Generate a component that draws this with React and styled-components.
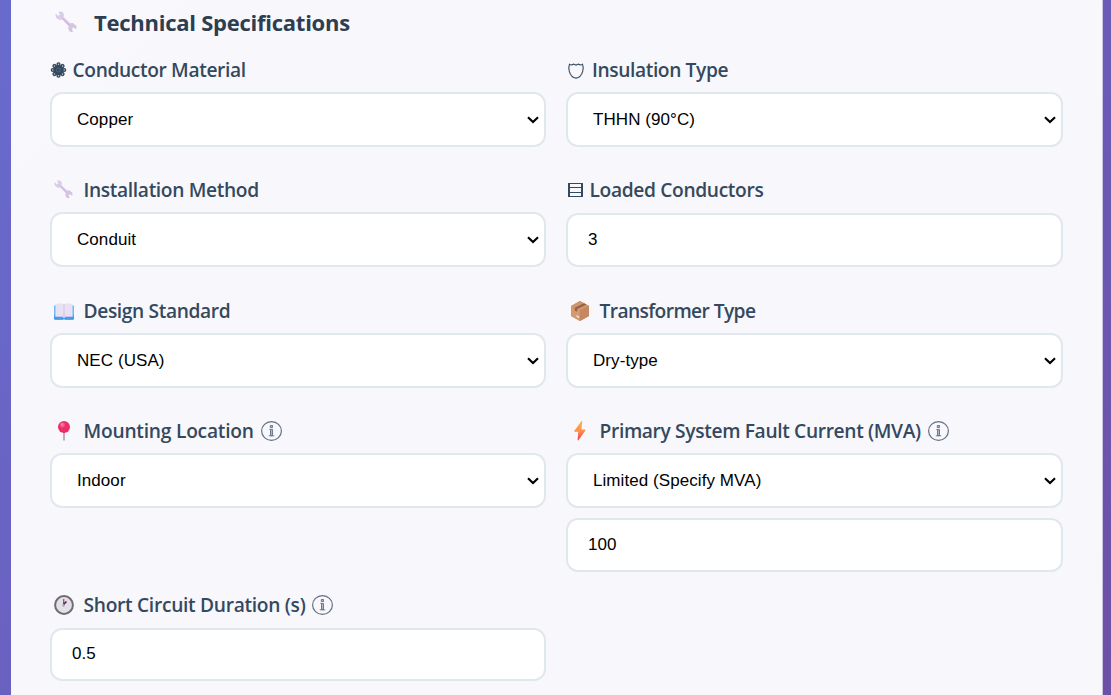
import React from "react";
import styled, { createGlobalStyle } from "styled-components";

const GlobalStyle = createGlobalStyle`
  * { box-sizing: border-box; }
  html, body, #root { height: 100%; }
  body { margin: 0; overflow: hidden; }
`;

const Page = styled.div`
  height: 695px;
  padding: 0 8px 0 11px;
  background: linear-gradient(135deg, #686bcd 0%, #6a5dbb 55%, #6d4fa5 100%);
  font-family: "Open Sans", "Noto Sans", sans-serif;
`;

const Card = styled.main`
  height: 100%;
  padding: 0 39px;
  border-right: 1px solid #c8c4e4;
  background: linear-gradient(135deg, #f8f9fe 0%, #f8f7fc 12%, #f8f7fc 100%);
`;

const Heading = styled.h2`
  display: flex;
  align-items: center;
  height: 62px;
  margin: 0;
  padding: 0 0 18px 1px;
  color: #2c3e50;
  font-size: 22px;
  font-weight: 700;
  letter-spacing: -0.25px;
  white-space: nowrap;
`;

const Grid = styled.div`
  display: grid;
  grid-template-columns: 496px 497px;
  grid-template-rows: 120px 121px 120px 174px 84px;
  column-gap: 20px;
`;

const Field = styled.div`
  display: flex;
  flex-direction: column;
`;

const Label = styled.label`
  display: flex;
  align-items: center;
  height: 30px;
  margin-bottom: ${(p) => p.$drop || 0}px;
  padding: 0 0 15px 1px;
  color: #34495e;
  font-size: 19.2px;
  font-weight: 600;
  line-height: 15px;
  letter-spacing: ${(p) => p.$spacing || 0}px;
  white-space: nowrap;
`;

const IconSlot = styled.span`
  display: flex;
  flex: none;
  width: ${(p) => p.$width}px;
  padding-left: ${(p) => p.$left || 0}px;
  svg { display: block; overflow: visible; }
`;

const InfoSlot = styled.span`
  display: flex;
  margin-left: 7px;
`;

const SelectWrap = styled.div`
  position: relative;
`;

const Select = styled.select`
  display: block;
  width: 100%;
  height: 55px;
  padding: 0 24px 1px 25px;
  border: 2px solid #e0e8ed;
  border-radius: 12px;
  background: #fff;
  color: #000;
  font: 17px "Liberation Sans", Arial, sans-serif;
  letter-spacing: 0.07px;
  appearance: none;
`;

const Chevron = styled.svg`
  position: absolute;
  top: 24px;
  right: 7px;
  pointer-events: none;
`;

const Input = styled.input`
  flex: none;
  width: 100%;
  height: ${(p) => p.$height || 54}px;
  margin-top: ${(p) => p.$gap || 0}px;
  padding: 0 20px 1px;
  border: 2px solid #e0e8ed;
  border-radius: 12px;
  background: #fff;
  color: #000;
  font: 17px "Liberation Sans", Arial, sans-serif;
  letter-spacing: 0.07px;
`;

const Wrench = ({ size = 22 }) => (
  <svg width={size} height={size} viewBox="0 0 22 22">
    <defs>
      <linearGradient id="wrench" x1="0" y1="0" x2="1" y2="1">
        <stop offset="0" stopColor="#d5d0dc" />
        <stop offset=".3" stopColor="#dccbea" />
        <stop offset=".65" stopColor="#d8c5e8" />
        <stop offset="1" stopColor="#cbc6ce" />
      </linearGradient>
    </defs>
    <path
      fill="url(#wrench)"
      d="M4.2.6 7.8 1 9 3.8 8.7 6l6.5 6.3 2.5-.4 3.6 2.8.1 3.1-1.1.1-1.5-1.6-2.1 1.7 1.3 2.2-.7 1-2.7-.7-1.5-2.9.5-2.6L7.2 8.6 4.5 9 1.1 6.8.3 3.4l1-.4L3 5.1l2.2-1.6L3.5 1.5Z"
    />
    <path d="m7 7 8 8" stroke="#b9a8d3" strokeWidth=".6" />
  </svg>
);

const Flower = () => (
  <svg width="16" height="16" viewBox="-7.5 -8 16 16">
    <circle r="5.3" fill="#34495e" />
    {[0, 45, 90, 135, 180, 225, 270, 315].map((a) => (
      <circle key={a} cx="5.7" r="1.4" transform={`rotate(${a})`} fill="#cbd1da" stroke="#34495e" strokeWidth="1.4" />
    ))}
    <circle r="2" fill="none" stroke="#66788b" strokeWidth=".6" />
  </svg>
);

const Shield = () => (
  <svg width="16" height="16" viewBox="0 -1 16 16" fill="none" stroke="#43566a" strokeWidth="1.2">
    <path d="M1.5 1.3c1.6.9 3 .7 4.2-.2L8 2l2.3-.9c1.2.9 2.6 1.1 4.2.2.8 2 .9 4.8.1 7.3C13.6 12.3 11.3 14.6 8 15.2 4.7 14.6 2.4 12.3 1.4 8.6.6 6.1.7 3.3 1.5 1.3Z" />
  </svg>
);

const Rows = () => (
  <svg width="15" height="14" viewBox="0 0 15 14" fill="none" stroke="#34495e">
    <path d="M1 0v14M14 0v14" strokeWidth="2" />
    <path d="M.5.5h14M1 4.5h13M1 9.5h13M.5 13.5h14" strokeWidth="1.2" />
  </svg>
);

const Book = () => (
  <svg width="20" height="17" viewBox="0 -1 20 17">
    <path d="M0 2.5h2v12h16v-12h2V16l-1 .7h-8l-1-.7-1 .7H1L0 16Z" fill="#6bbcf5" />
    <path d="M0 12.5h20V16l-1 .7h-8l-1-.7-1 .7H1L0 16Z" fill="#429eed" />
    <path d="M1.5 1.3 3 .5h5l2 1 2-1h5l1.5.8V14h-7L10 15l-1.5-1h-7Z" fill="#e9e0f3" />
    <path d="M10 1.5V15" stroke="#cfc2df" />
    <path d="M2 13.5h7M11 13.5h7" stroke="#c8c7ef" />
  </svg>
);

const Package = () => (
  <svg width="18" height="20" viewBox="0 0 18 20">
    <path d="m0 5 9-5 9 5v10l-9 5-9-5Z" fill="#c9895a" />
    <path d="m0 5 9-5 9 5-9 4.5Z" fill="#d09569" />
    <path d="m0 5 9 4.5V20l-9-5Z" fill="#d49a6e" />
    <path d="m9 9.5 9-4.5v10l-9 5Z" fill="#c48760" />
    <path d="m3.8 6.8 9.3-4.6 2.2 1.2-9.2 4.7Z" fill="#906149" />
    <path d="m3.8 6.8 2.3 1.3v2.6L3.8 9.5Z" fill="#906149" />
    <path d="m5.5 14 2.5 1.3v2L5.5 16Z" fill="#eddbd5" />
  </svg>
);

const Pin = () => (
  <svg width="12" height="20" viewBox="0 0 12 20">
    <path d="M6 11v8.5" stroke="#a799b1" strokeWidth="1.5" />
    <circle cx="6" cy="6" r="6" fill="#ee2d68" />
    <circle cx="4.5" cy="4" r="2.4" fill="#fa5c88" />
    <circle cx="4" cy="3.5" r="1" fill="#ff91a9" />
  </svg>
);

const Bolt = () => (
  <svg width="12" height="20" viewBox="0 0 12 20">
    <defs>
      <linearGradient id="bolt" x1="0" y1="0" x2="0" y2="1">
        <stop offset="0" stopColor="#ffb33c" />
        <stop offset=".5" stopColor="#ff914b" />
        <stop offset="1" stopColor="#f4365b" />
      </linearGradient>
    </defs>
    <path d="M7.5 0 .2 10l.3.8h3.8L3.6 19l.6.5L11.500 9.400l-.4-.8H7.400L8.300.5Z" fill="url(#bolt)" />
  </svg>
);

const Clock = () => (
  <svg width="20" height="20" viewBox="0 0 20 20">
    <circle cx="10" cy="10" r="8.9" fill="#e4e0e7" stroke="#6f6b72" strokeWidth="2" />
    <path d="M9.7 4v5.500" stroke="#ed285f" strokeWidth="1.3" />
    <path d="m9.5 9.5 3-3" stroke="#40315c" strokeWidth="1.7" />
    <circle cx="9.5" cy="10.5" r="1.2" fill="#aaa3b0" />
  </svg>
);

const Info = () => (
  <InfoSlot>
    <svg width="21" height="20" viewBox="0 0 21 20" fill="none" stroke="#607184">
      <ellipse cx="10.5" cy="10" rx="9.9" ry="9.3" strokeWidth="1.2" />
      <path d="M9.3 4.500h2.200v2H9.300zM8.400 8.400h3.100v6.200H9.500V8.400M7.800 14.800h5.400" strokeWidth=".9" fill="#aeb7c1" />
    </svg>
  </InfoSlot>
);

function Caption({ icon, left, slot = 32.5, text, spacing = -0.35, info, drop }) {
  return (
    <Label $spacing={spacing} $drop={drop}>
      <IconSlot $width={slot} $left={left}>{icon}</IconSlot>
      {text}
      {info && <Info />}
    </Label>
  );
}

function Choice({ value }) {
  return (
    <SelectWrap>
      <Select defaultValue={value}>
        <option>{value}</option>
      </Select>
      <Chevron width="12" height="8" viewBox="0 0 12 8" fill="none" stroke="#000" strokeWidth="2.2">
        <path d="m1 1.3 5 4.7 5-4.7" />
      </Chevron>
    </SelectWrap>
  );
}

export default function App() {
  return (
    <>
      <GlobalStyle />
      <Page>
        <Card>
          <Heading>
            <IconSlot $width={43} $left={4}><Wrench /></IconSlot>
            Technical Specifications
          </Heading>
          <Grid>
            <Field>
              <Caption icon={<Flower />} slot={21.5} text="Conductor Material" spacing={-0.37} />
              <Choice value="Copper" />
            </Field>
            <Field>
              <Caption icon={<Shield />} left={1} slot={25} text="Insulation Type" spacing={-0.39} />
              <Choice value="THHN (90°C)" />
            </Field>
            <Field>
              <Caption icon={<Wrench size={19} />} left={3} text="Installation Method" />
              <Choice value="Conduit" />
            </Field>
            <Field>
              <Caption icon={<Rows />} left={1} slot={22.5} text="Loaded Conductors" drop={1} />
              <Input defaultValue="3" />
            </Field>
            <Field>
              <Caption icon={<Book />} left={3} text="Design Standard" spacing={-0.37} />
              <Choice value="NEC (USA)" />
            </Field>
            <Field>
              <Caption icon={<Package />} left={4} text="Transformer Type" spacing={-0.6} />
              <Choice value="Dry-type" />
            </Field>
            <Field>
              <Caption icon={<Pin />} left={7} text="Mounting Location" spacing={-0.23} info />
              <Choice value="Indoor" />
            </Field>
            <Field>
              <Caption icon={<Bolt />} left={7} text="Primary System Fault Current (MVA)" info />
              <Choice value="Limited (Specify MVA)" />
              <Input defaultValue="100" $gap={10} />
            </Field>
            <Field>
              <Caption icon={<Clock />} left={3} text="Short Circuit Duration (s)" spacing={-0.3} drop={1} info />
              <Input defaultValue="0.5" $height={53} />
            </Field>
          </Grid>
        </Card>
      </Page>
    </>
  );
}
